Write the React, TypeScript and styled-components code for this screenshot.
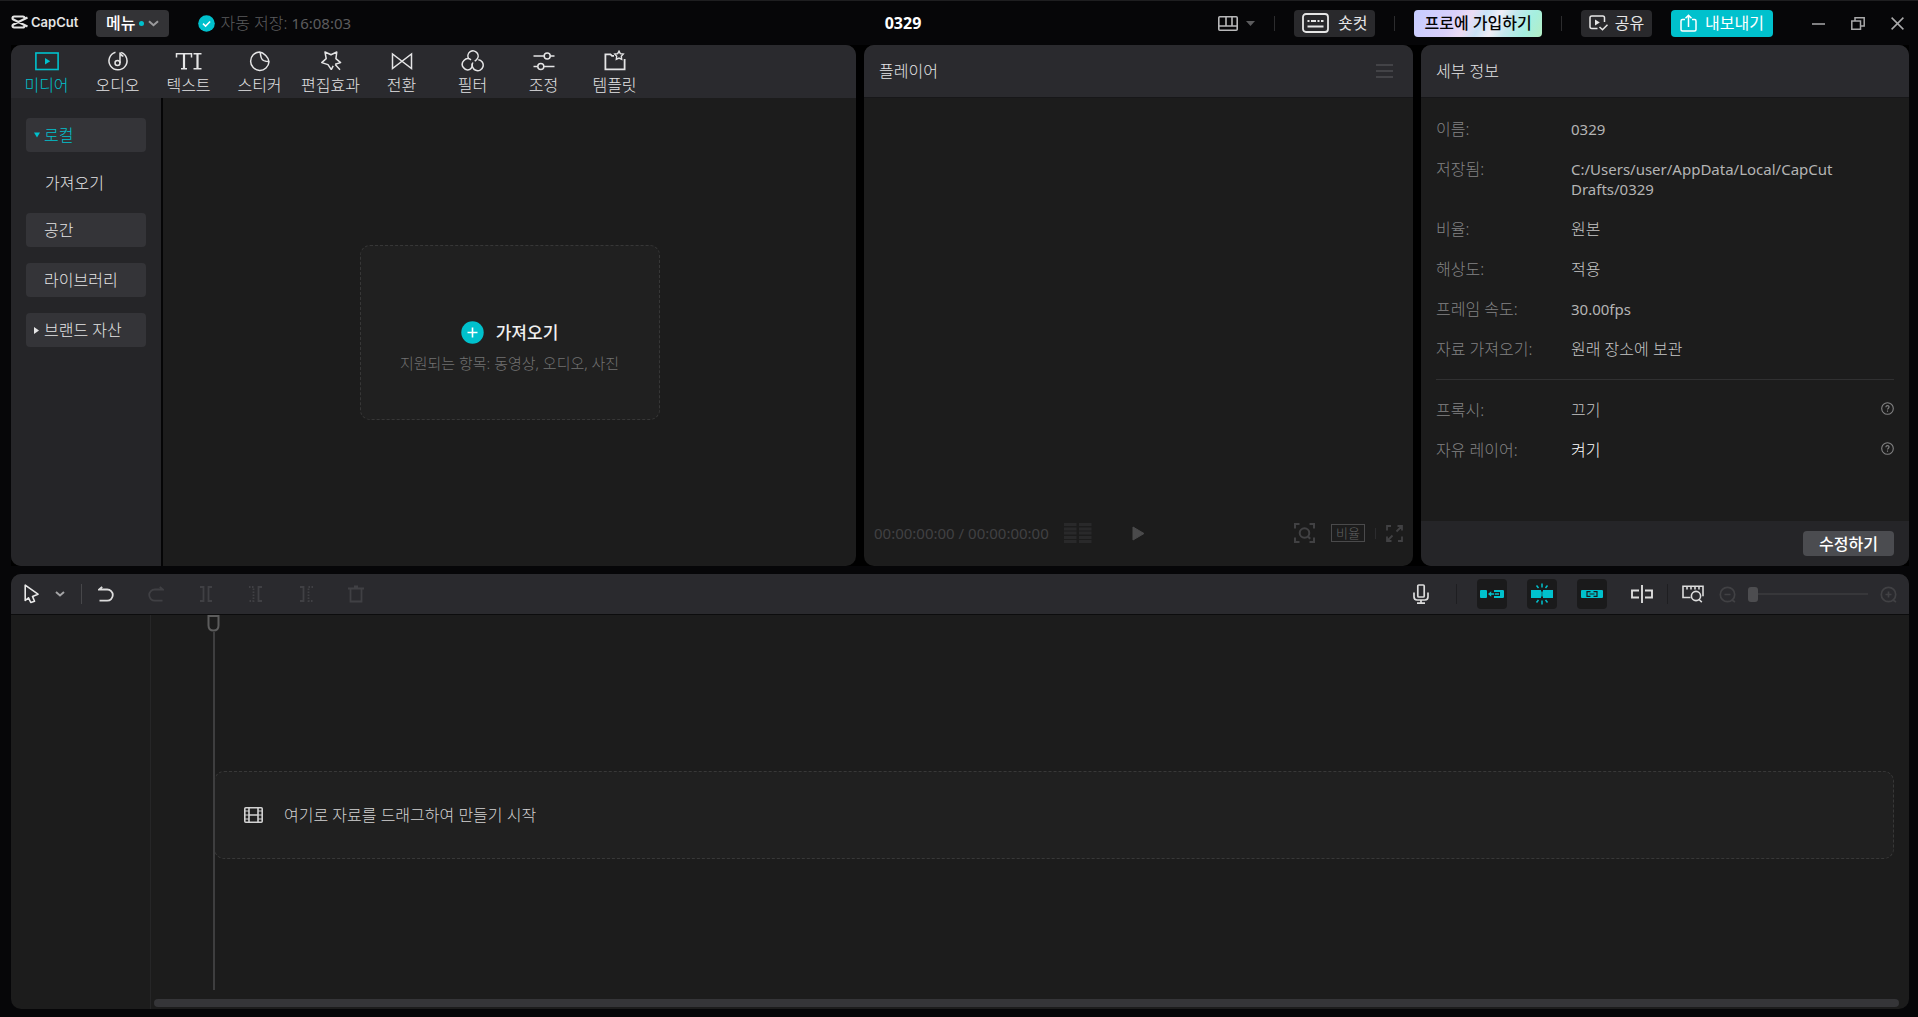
import React from "react";
import styled, { createGlobalStyle, css } from "styled-components";

const color = {
  shell: "#060608",
  panel: "#1c1c1c",
  header: "#2a2a2e",
  sidebar: "#252528",
  item: "#343438",
  accent: "#00c1cd",
  text: "#e4e4e5",
  muted: "#838384",
  dim: "#414143",
};

const GlobalStyle = createGlobalStyle`
  *, *::before, *::after { box-sizing: border-box; }
  body {
    margin: 0;
    background: ${color.shell};
    color: ${color.text};
    font-family: "Noto Sans", "Noto Sans CJK KR", sans-serif;
    font-size: 16px;
    line-height: 20px;
    font-weight: 300;
  }
  button {
    margin: 0;
    padding: 0;
    border: 0;
    background: none;
    color: inherit;
    font: inherit;
    white-space: nowrap;
  }
  h1, h2, p, dl, dt, dd { margin: 0; font: inherit; }
  svg { display: block; flex: none; }
`;

const Shell = styled.div`
  display: grid;
  grid-template-rows: 44px minmax(420px, 521fr) minmax(300px, 443fr);
  min-height: 100vh;
  border-top: 1px solid #1e1e20;
  padding: 0 9px 8px 11px;
`;

/* ---------- title bar ---------- */

const TitleBar = styled.header`
  display: grid;
  grid-template-columns: 874fr auto 988fr;
  align-items: center;
`;

const BarLeft = styled.div`
  display: flex;
  align-items: center;
`;

const BarRight = styled.div`
  display: flex;
  align-items: center;
  justify-content: flex-end;
  gap: 19px;
`;

const Brand = styled.div`
  display: flex;
  align-items: center;
  gap: 3px;
  width: 85px;
  padding-bottom: 2px;
  color: #e4e4e4;
  font-family: Inter, sans-serif;
  font-size: 13px;
  font-weight: 600;
`;

const ProjectName = styled.h1`
  color: #fff;
  font-weight: 700;
`;

const BarButton = styled.button<{ $tone?: "dark" | "menu" | "pro" | "accent"; $pad: number; $gap?: number }>`
  display: flex;
  align-items: center;
  gap: ${(p) => p.$gap ?? 6}px;
  height: 27px;
  padding: 0 ${(p) => p.$pad}px;
  border-radius: 4px;
  background: #29292c;
  color: #e6e6e6;
  font-weight: 400;
  ${(p) => p.$tone === "menu" && css`background: #333336; color: #fff; font-weight: 500;`}
  ${(p) =>
    p.$tone === "pro" &&
    css`
      background: linear-gradient(118deg, #c6ccff 0%, #d9d0fb 30%, #ecdcf4 42%, #c9e2f6 52%, #f0eef6 62%, #c4e8ee 72%, #a5efe0 86%, #b4eec4 100%);
      color: #050505;
      font-weight: 500;
    `}
  ${(p) => p.$tone === "accent" && css`background: ${color.accent}; color: #fff;`}
`;

const MenuDot = styled.span`
  width: 5px;
  height: 5px;
  border-radius: 50%;
  background: ${color.accent};
`;

const AutoSave = styled.p`
  display: flex;
  align-items: center;
  gap: 5px;
  margin-left: 29px;
  color: #5c5c5e;
`;

const Latin = styled.span`
  font-size: 15px;
  font-weight: 400;
`;

const Rule = styled.span<{ $h?: number; $c?: string }>`
  flex: none;
  width: 1px;
  height: ${(p) => p.$h ?? 15}px;
  background: ${(p) => p.$c ?? "#2c2c2e"};
`;

const LayoutButton = styled.button`
  display: flex;
  align-items: center;
  gap: 8px;
  color: #b8b8b9;
`;

const WindowButtons = styled.div`
  display: flex;
  align-items: center;
  gap: 26px;
  margin-left: 20px;
  padding-right: 5px;
  color: #a9a9aa;
`;

/* ---------- panels ---------- */

const Workspace = styled.main`
  display: grid;
  grid-template-columns: 845fr 549fr 488fr;
  gap: 8px;
  background: #000;
`;

const Panel = styled.section`
  display: flex;
  flex-direction: column;
  min-width: 0;
  border-radius: 10px;
  overflow: hidden;
  background: ${color.panel};
`;

const PanelHeader = styled.header`
  display: flex;
  align-items: center;
  justify-content: space-between;
  height: 53px;
  padding: 0 20px 0 15px;
  border-bottom: 1px solid #171719;
  background: ${color.header};
`;

const Tabs = styled.nav`
  display: grid;
  grid-template-columns: repeat(9, 1fr);
  flex: none;
  height: 53px;
  padding-right: 206px;
  background: ${color.header};
`;

const Tab = styled.button<{ $active?: boolean }>`
  display: flex;
  flex-direction: column;
  align-items: center;
  gap: 3px;
  padding-top: 5px;
  color: ${(p) => (p.$active ? color.accent : color.text)};
`;

const MediaBody = styled.div`
  display: grid;
  grid-template-columns: 152px 1fr;
  flex: 1;
`;

const Sidebar = styled.nav`
  display: flex;
  flex-direction: column;
  gap: 16px;
  padding: 20px 15px;
  border-right: 2px solid #050506;
  background: ${color.sidebar};
`;

const SideItem = styled.button<{ $active?: boolean }>`
  display: grid;
  grid-template-columns: 10px auto;
  align-items: center;
  justify-content: start;
  height: 34px;
  padding-left: 8px;
  border-radius: 4px;
  background: ${color.item};
  color: ${(p) => (p.$active ? color.accent : color.text)};
`;

const SideChild = styled.button`
  height: 29px;
  padding: 0 0 0 19px;
  text-align: left;
`;

const ImportArea = styled.div`
  display: flex;
  align-items: center;
  justify-content: center;
`;

const ImportBox = styled.button`
  display: flex;
  flex-direction: column;
  align-items: center;
  gap: 8px;
  width: 300px;
  height: 175px;
  padding-top: 75px;
  border: 1px dashed #373737;
  border-radius: 10px;
  background: #202020;
`;

const ImportTitle = styled.span`
  display: flex;
  align-items: center;
  gap: 12px;
  height: 24px;
  color: #f0f0f0;
  font-size: 17px;
  font-weight: 500;
`;

const ImportHint = styled.span`
  color: #727272;
  font-size: 15px;
`;

const Stage = styled.div`
  flex: 1;
`;

const PlayerControls = styled.footer`
  display: grid;
  grid-template-columns: 1fr auto 1fr;
  align-items: center;
  height: 66px;
  padding: 0 10px;
  color: ${color.dim};
`;

const ControlGroup = styled.div<{ $end?: boolean; $gap: number }>`
  display: flex;
  align-items: center;
  justify-content: ${(p) => (p.$end ? "flex-end" : "flex-start")};
  gap: ${(p) => p.$gap}px;
`;

const Timecode = styled.span`
  font-size: 15px;
  font-weight: 400;
  white-space: nowrap;
`;

const RatioButton = styled.button`
  height: 18px;
  padding: 0 4px;
  border: 1px solid #4a4a4b;
  color: #626263;
  font-size: 13px;
  line-height: 16px;
`;

const Details = styled.dl`
  display: flex;
  flex: 1;
  flex-direction: column;
  gap: 20px;
  padding: 21px 15px 0;
`;

const DetailRow = styled.div`
  display: grid;
  grid-template-columns: 135px 1fr auto;
  color: ${color.muted};
`;

const DetailValue = styled.dd<{ $bright?: boolean; $latin?: boolean }>`
  color: ${(p) => (p.$bright ? "#ffffff" : p.$latin ? "#b4b4b4" : "#c6c6c6")};
  font-size: ${(p) => (p.$latin ? 15 : 16)}px;
  font-weight: ${(p) => (p.$latin ? 400 : 300)};
`;

const DetailHelp = styled.dd`
  padding-top: 2px;
`;

const Divider = styled.hr`
  width: 100%;
  height: 1px;
  margin: 0;
  border: 0;
  background: #303031;
`;

const DetailsFooter = styled.footer`
  display: flex;
  align-items: center;
  justify-content: flex-end;
  height: 45px;
  padding: 0 15px;
  background: ${color.sidebar};
`;

const EditButton = styled.button`
  height: 25px;
  padding: 0 16px;
  border-radius: 4px;
  background: #4b4c50;
  color: #fff;
  font-weight: 500;
`;

/* ---------- timeline ---------- */

const Timeline = styled(Panel)`
  margin-top: 8px;
`;

const Toolbar = styled.div`
  display: flex;
  align-items: center;
  flex: none;
  height: 41px;
  padding: 0 12px 0 10px;
  border-bottom: 1px solid #0c0c0d;
  background: ${color.header};
`;

const ToolGroup = styled.div<{ $push?: boolean }>`
  display: flex;
  align-items: center;
  gap: 20px;
  ${(p) => (p.$push ? css`margin-left: auto;` : css`padding-left: 9px;`)}
`;

const Tool = styled.button<{ $on?: boolean; $off?: boolean }>`
  display: grid;
  place-items: center;
  width: 30px;
  height: 30px;
  border-radius: 4px;
  color: ${(p) => (p.$on ? color.accent : p.$off ? "#404044" : "#dcdcdc")};
  background: ${(p) => (p.$on ? "#1a1a1b" : "none")};
`;

const PointerTool = styled.button`
  display: flex;
  align-items: center;
  gap: 15px;
  padding: 0 16px 0 3px;
  color: #e8e8e8;
`;

const ToolRule = styled.span`
  display: flex;
  padding: 0 10px;
`;

const ZoomGroup = styled.div`
  display: flex;
  align-items: center;
  gap: 12px;
  margin-left: 11px;
  color: #414144;
`;

const ZoomRange = styled.input`
  appearance: none;
  width: 120px;
  height: 16px;
  margin: 0;
  background: linear-gradient(#37373a, #37373a) center / 100% 2px no-repeat;
  &::-webkit-slider-thumb {
    appearance: none;
    width: 10px;
    height: 15px;
    border-radius: 3px;
    background: #4d4d50;
  }
`;

const Tracks = styled.div`
  display: grid;
  grid-template-columns: 140px 1fr;
  flex: 1;
`;

const TrackHeads = styled.div`
  border-right: 1px solid #262627;
`;

const Lanes = styled.div`
  position: relative;
  display: grid;
  grid-template-rows: 156fr 88px 140fr 8px 2px;
`;

const DropLane = styled.div`
  display: flex;
  align-items: center;
  grid-row: 2;
  gap: 21px;
  margin: 0 15px 0 63px;
  padding-left: 29px;
  border: 1px dashed #383838;
  border-radius: 10px;
  background: #202020;
  color: #d2d2d2;
`;

const ScrollThumb = styled.div`
  grid-row: 4;
  margin: 0 10px 0 3px;
  border-radius: 4px;
  background: #353538;
`;

const Playhead = styled.div`
  position: absolute;
  top: 0;
  bottom: 19px;
  left: 56px;
  display: flex;
  flex-direction: column;
  align-items: center;
  width: 13px;
  color: #5c5c5c;
  &::after {
    content: "";
    flex: 1;
    width: 2px;
    background: #3e3e3f;
  }
`;

/* ---------- icons ---------- */

type IconProps = { w: number; h: number; sw?: number; children: React.ReactNode };

const Icon = ({ w, h, sw = 1.5, children }: IconProps) => (
  <svg width={w} height={h} viewBox={`0 0 ${w} ${h}`} fill="none" stroke="currentColor" strokeWidth={sw} aria-hidden="true">
    {children}
  </svg>
);

const Chevron = ({ c }: { c: string }) => (
  <svg width="11" height="7" viewBox="0 0 11 7" fill="none" stroke={c} strokeWidth="2" aria-hidden="true">
    <path d="M1 1.2l4.5 4 4.5-4" />
  </svg>
);

const HelpIcon = () => (
  <Icon w={13} h={13} sw={1.1}>
    <circle cx="6.5" cy="6.5" r="5.8" />
    <path d="M4.9 5.2c0-2.2 3.3-2 3.2-.1 0 1.1-1.6 1.2-1.6 2.5M6.5 8.6v1.2" />
  </Icon>
);

const tabs = [
  {
    label: "미디어",
    icon: (
      <Icon w={24} h={22} sw={1.6}>
        <rect x="0.9" y="3" width="22.2" height="16.5" />
        <path d="M10 8v6.6l5.2-3.3z" fill="currentColor" stroke="none" />
      </Icon>
    ),
  },
  {
    label: "오디오",
    icon: (
      <Icon w={22} h={22}>
        <path d="M8.5 2.2a9 9 0 1 0 5.6.2" />
        <circle cx="10.5" cy="13" r="2.5" />
        <path d="M13 13V2.5c.4 2.2 1.6 3.3 3.4 3.7" />
      </Icon>
    ),
  },
  {
    label: "텍스트",
    icon: (
      <Icon w={28} h={22} sw={1.5}>
        <path d="M1.5 7.5V3.8h15v3.700M6 18.8h6M18.5 3.8h8M18.5 18.8h8" />
        <path d="M9 4v14.500M22.5 4v14.5" strokeWidth="2.200" />
      </Icon>
    ),
  },
  {
    label: "스티커",
    icon: (
      <Icon w={22} h={22}>
        <path d="M10.5 2a9.2 9.2 0 1 0 9.5 9.8C20 8 14.5 2.3 10.5 2zM10.5 2c1 .8 1 2.300 1.300 4 .4 3.200 2.200 5 5.200 5.200 1.500 0 2.500 0 3 .6" />
      </Icon>
    ),
  },
  {
    label: "편집효과",
    icon: (
      <Icon w={22} h={22}>
        <path d="M11.300 19.600L8 14.600l-6.300-2 4.500-4L5 2l6 2.800L16.800 2l-.9 6.600 4.700 4-5.400 1.600M11.300 19.600l1.900-3.800M15.200 14.600l4.800 5.200" strokeLinejoin="round" />
      </Icon>
    ),
  },
  {
    label: "전환",
    icon: (
      <Icon w={22} h={22}>
        <path d="M1.5 4v14.500L20.500 4v14.500z" />
      </Icon>
    ),
  },
  {
    label: "필터",
    icon: (
      <Icon w={24} h={22}>
        <path d="M7.500 8.300a5.100 5.100 0 1 1 8.200 1.200c-.6.700-1.300 1.200-2 1.700" />
        <path d="M10 9.800A5.500 5.500 0 1 0 9.300 19.200M11 13.500a5.600 5.600 0 0 1-1.700 5.700" />
        <path d="M17.300 9.700a5.500 5.500 0 1 1-5.400 2.800" />
      </Icon>
    ),
  },
  {
    label: "조정",
    icon: (
      <Icon w={22} h={22}>
        <path d="M.5 6h10.800M17.200 6h4.300M.5 16.500h4.300M10.700 16.500h10.800" />
        <circle cx="14.2" cy="6" r="3" />
        <circle cx="7.8" cy="16.5" r="3" />
      </Icon>
    ),
  },
  {
    label: "템플릿",
    icon: (
      <Icon w={22} h={22} sw={1.8}>
        <path d="M10 5.800H8L6.500 4.300H1.400v15h19.200V9" />
        <path d="M15 1.200l1.300 2.400 3 .5-2 2.200.4 3L15 8.100l-2.700 1.200.4-3-2-2.200 3-.5z" strokeWidth="1.400" />
      </Icon>
    ),
  },
];

const details: { label: string; value: string; latin?: boolean }[] = [
  { label: "이름:", value: "0329", latin: true },
  { label: "저장됨:", value: "C:/Users/user/AppData/Local/CapCut Drafts/0329", latin: true },
  { label: "비율:", value: "원본" },
  { label: "해상도:", value: "적용" },
  { label: "프레임 속도:", value: "30.00fps", latin: true },
  { label: "자료 가져오기:", value: "원래 장소에 보관" },
];

const options = [
  { label: "프록시:", value: "끄기" },
  { label: "자유 레이어:", value: "켜기", bright: true },
];

const Header = () => (
  <TitleBar>
    <BarLeft>
      <Brand>
        <Icon w={17} h={14} sw={2.2}>
          <path d="M13.5 4.2V3.2c0-1-.6-1.700-1.600-1.700H3.100c-1 0-1.600.7-1.600 1.700 0 .7.3 1.100.9 1.400L16.500 11.500M13.500 9.800v1c0 1-.6 1.700-1.600 1.700H3.100c-1 0-1.600-.7-1.600-1.700 0-.7.3-1.100.9-1.400L16.500 2.500" />
        </Icon>
        CapCut
      </Brand>
      <BarButton $tone="menu" $pad={10} $gap={4}>
        메뉴
        <MenuDot />
        <Chevron c="#9a9a9c" />
      </BarButton>
      <AutoSave>
        <svg width="17" height="17" viewBox="0 0 17 17" aria-hidden="true">
          <circle cx="8.5" cy="8.5" r="8.3" fill={color.accent} />
          <path d="M5 8.6l2.600 2.500 4.500-4.600" fill="none" stroke="#fff" strokeWidth="1.5" />
        </svg>
        <span>
          자동 저장: <Latin>16:08:03</Latin>
        </span>
      </AutoSave>
    </BarLeft>
    <ProjectName>0329</ProjectName>
    <BarRight>
      <LayoutButton aria-label="레이아웃">
        <Icon w={20} h={15} sw={1.6}>
          <rect x="0.8" y="0.8" width="18.4" height="13.4" rx="1" />
          <path d="M1 10h18M8 1v9M14 1v9" />
        </Icon>
        <svg width="9" height="5" viewBox="0 0 9 5" aria-hidden="true">
          <path d="M0 0h9L4.500 5z" fill="#5b5b5d" />
        </svg>
      </LayoutButton>
      <Rule />
      <BarButton $pad={8} $gap={9}>
        <Icon w={27} h={20} sw={1.8}>
          <rect x="1" y="1" width="25" height="18" rx="3" />
          <path d="M5.500 8h2M9 8h5M15.500 8h2M19 8h2.500M5.500 13.500h16" />
        </Icon>
        숏컷
      </BarButton>
      <Rule />
      <BarButton $tone="pro" $pad={10}>프로에 가입하기</BarButton>
      <Rule />
      <BarButton $pad={8} $gap={7}>
        <Icon w={19} h={16}>
          <path d="M8.500 13.500H2.800c-1 0-1.800-.7-1.800-1.700V2.800C1 1.700 1.800 1 2.800 1h11c1 0 1.700.7 1.700 1.800V7M10.500 12l3 2.800 5-5" />
          <path d="M6 4.500v6l4.800-3z" fill="currentColor" stroke="none" />
        </Icon>
        공유
      </BarButton>
      <BarButton $tone="accent" $pad={9} $gap={8}>
        <Icon w={17} h={18}>
          <path d="M5 5.500H2.500c-1 0-1.500.6-1.500 1.500v8.500c0 1 .6 1.500 1.500 1.500h12c1 0 1.500-.6 1.500-1.500V7c0-1-.6-1.500-1.500-1.500H12M8.500 13V1.500M5.500 4.300l3-3 3 3" />
        </Icon>
        내보내기
      </BarButton>
      <WindowButtons>
        <button aria-label="최소화">
          <Icon w={13} h={13}><path d="M0 7h13" /></Icon>
        </button>
        <button aria-label="이전 크기로">
          <Icon w={14} h={13}><path d="M.8 4h8.700v8.300H.8zM4 4V.8h9.200V9H9.500" /></Icon>
        </button>
        <button aria-label="닫기">
          <Icon w={13} h={13}><path d="M.6.6l11.800 11.800M12.400.6L.6 12.400" /></Icon>
        </button>
      </WindowButtons>
    </BarRight>
  </TitleBar>
);

const MediaPanel = () => (
  <Panel>
    <Tabs>
      {tabs.map((t, i) => (
        <Tab key={t.label} $active={i === 0}>
          {t.icon}
          {t.label}
        </Tab>
      ))}
    </Tabs>
    <MediaBody>
      <Sidebar>
        <SideItem $active>
          <svg width="6" height="6" viewBox="0 0 6 6" aria-hidden="true"><path d="M0 .5h6L3 5.500z" fill="currentColor" /></svg>
          로컬
        </SideItem>
        <SideChild>가져오기</SideChild>
        <SideItem><span />공간</SideItem>
        <SideItem><span />라이브러리</SideItem>
        <SideItem>
          <svg width="6" height="7" viewBox="0 0 6 7" aria-hidden="true"><path d="M0 0v7l5-3.500z" fill="currentColor" /></svg>
          브랜드 자산
        </SideItem>
      </Sidebar>
      <ImportArea>
        <ImportBox>
          <ImportTitle>
            <svg width="23" height="23" viewBox="0 0 23 23" aria-hidden="true">
              <circle cx="11.5" cy="11.5" r="11.2" fill={color.accent} />
              <path d="M6.500 11.500h10M11.500 6.500v10" stroke="#fff" strokeWidth="1.6" />
            </svg>
            가져오기
          </ImportTitle>
          <ImportHint>지원되는 항목: 동영상, 오디오, 사진</ImportHint>
        </ImportBox>
      </ImportArea>
    </MediaBody>
  </Panel>
);

const PlayerPanel = () => (
  <Panel>
    <PanelHeader>
      <h2>플레이어</h2>
      <button aria-label="플레이어 메뉴">
        <svg width="17" height="14" viewBox="0 0 17 14" stroke="#434347" strokeWidth="2" aria-hidden="true">
          <path d="M0 1h17M0 7h17M0 13h17" />
        </svg>
      </button>
    </PanelHeader>
    <Stage />
    <PlayerControls>
      <ControlGroup $gap={15}>
        <Timecode>00:00:00:00 / 00:00:00:00</Timecode>
        <svg width="28" height="20" viewBox="0 0 28 20" stroke="#29292a" strokeWidth="3" aria-hidden="true">
          <path d="M0 1.500h12.500M15 1.500h12.500M0 6h12.500M15 6h12.500M0 10h12.500M15 10h12.500M0 14.500h12.500M15 14.500h12.500M0 18.500h12.500M15 18.500h12.500" />
        </svg>
      </ControlGroup>
      <button aria-label="재생">
        <svg width="13" height="15" viewBox="0 0 13 15" aria-hidden="true">
          <path d="M1 1v13l11-6.500z" fill="#4a4a4b" stroke="#4a4a4b" strokeLinejoin="round" />
        </svg>
      </button>
      <ControlGroup $end $gap={10}>
        <ControlGroup $gap={16}>
          <button aria-label="확대 보기">
            <Icon w={21} h={20} sw={2}>
              <path d="M1 5.500V1h4.500M15.500 1H20v4.500M20 14.500V19h-4.500M5.500 19H1v-4.500" />
              <circle cx="10.5" cy="10" r="4.8" />
              <path d="M14 13.500l2.200 2.200" />
            </Icon>
          </button>
          <RatioButton>비율</RatioButton>
        </ControlGroup>
        <Rule $h={11} />
        <button aria-label="전체 화면">
          <Icon w={17} h={17} sw={1.8}>
            <path d="M1 5.500V1h4M11.500 1H16v4.500M16 11.500V16h-4M5.500 16H1v-4.500M16 1l-5.500 5.500M1 16l5.500-5.500" />
          </Icon>
        </button>
      </ControlGroup>
    </PlayerControls>
  </Panel>
);

const DetailsPanel = () => (
  <Panel>
    <PanelHeader>
      <h2>세부 정보</h2>
    </PanelHeader>
    <Details>
      {details.map((d) => (
        <DetailRow key={d.label}>
          <dt>{d.label}</dt>
          <DetailValue $latin={d.latin}>{d.value}</DetailValue>
        </DetailRow>
      ))}
      <Divider />
      {options.map((o) => (
        <DetailRow key={o.label}>
          <dt>{o.label}</dt>
          <DetailValue $bright={o.bright}>{o.value}</DetailValue>
          <DetailHelp><HelpIcon /></DetailHelp>
        </DetailRow>
      ))}
    </Details>
    <DetailsFooter>
      <EditButton>수정하기</EditButton>
    </DetailsFooter>
  </Panel>
);

const TimelinePanel = () => (
  <Timeline>
    <Toolbar>
      <PointerTool aria-label="선택 도구">
        <Icon w={16} h={20} sw={1.6}>
          <path d="M1.200 1.200v15.300l3.300-2.700 2.300 4.700 3.700-1.300-2-4.800 5.500-2.200z" strokeLinejoin="round" />
        </Icon>
        <svg width="10" height="6" viewBox="0 0 10 6" fill="none" stroke="#a4a4a6" strokeWidth="2" aria-hidden="true"><path d="M1 1l4 3.500L9 1" /></svg>
      </PointerTool>
      <Rule $h={20} $c="#47474a" />
      <ToolGroup>
        <Tool aria-label="실행 취소">
          <Icon w={16} h={16} sw={1.8}><path d="M4.200.8L1.200 3.500h8a5.600 5.600 0 0 1 0 11.200H1.500" /></Icon>
        </Tool>
        <Tool $off aria-label="다시 실행">
          <Icon w={16} h={16} sw={1.8}><path d="M11.800.8l3 2.700h-8a5.600 5.600 0 0 0 0 11.200h7.700" /></Icon>
        </Tool>
        <Tool $off aria-label="분할">
          <Icon w={14} h={16} sw={1.8}><path d="M1 1h3.500v14H1M13 1H9.500v14H13" /></Icon>
        </Tool>
        <Tool $off aria-label="왼쪽 삭제">
          <Icon w={14} h={16} sw={1.8}><path d="M0 1h4.500v14H0" strokeDasharray="1.5 1.5" /><path d="M13 1H9.500v14H13" /></Icon>
        </Tool>
        <Tool $off aria-label="오른쪽 삭제">
          <Icon w={14} h={16} sw={1.8}><path d="M1 1h3.500v14H1" /><path d="M14 1H9.500v14H14" strokeDasharray="1.5 1.5" /></Icon>
        </Tool>
        <Tool $off aria-label="삭제">
          <Icon w={16} h={18} sw={1.8}><path d="M0 3.500h16M6 1.500h4M2.500 4v12.500h11V4" /></Icon>
        </Tool>
      </ToolGroup>
      <ToolGroup $push>
        <Tool aria-label="녹음">
          <Icon w={16} h={20} sw={1.7}>
            <rect x="4.800" y="1" width="6.4" height="12" rx="1" />
            <path d="M1 8.500v4.300c0 2 1 3.200 3 3.200h8c2 0 3-1.200 3-3.200V8.500M8 16v3.200M4 19.200h8" />
          </Icon>
        </Tool>
        <Rule $h={20} $c="#1e1e21" />
        <Tool $on aria-label="메인 트랙 자석">
          <svg width="24" height="10" viewBox="0 0 24 10" fill="currentColor" aria-hidden="true">
            <rect y="1" width="7" height="8" rx="1" />
            <path d="M8 5l3.200-2.800v2h3v1.600h-3v2z" />
            <path d="M14 1h8.500c.9 0 1.500.5 1.500 1.300v5.400c0 .8-.6 1.300-1.500 1.300H14V7h6V3h-6z" />
            <path d="M15 4.300h4v1.400h-4z" />
          </svg>
        </Tool>
        <Tool $on aria-label="자동 스냅">
          <Icon w={22} h={22} sw={1.5}>
            <path d="M0 7h10v8H0zM12 7h10v8H12z" fill="currentColor" stroke="none" />
            <path d="M11 8.500v5M11 .5v4M11 17.500v4M5.500 2.500l2 2.500M16.500 2.500l-2 2.500M5.500 19.500l2-2.500M16.500 19.500l-2-2.500" />
          </Icon>
        </Tool>
        <Tool $on aria-label="연결">
          <svg width="22" height="10" viewBox="0 0 22 10" aria-hidden="true">
            <rect y="1" width="22" height="8" rx="1" fill="currentColor" />
            <path d="M9.500 2.700H6v4.600h3.500M12.500 2.700H16v4.600h-3.500M8.500 5h5" fill="none" stroke="#1a1a1b" strokeWidth="1.2" />
          </svg>
        </Tool>
        <Tool aria-label="미리보기 축">
          <Icon w={22} h={18} sw={1.9}><path d="M8 5.500H1v7h7M14 5.500h7v7h-7M11 0v18" /></Icon>
        </Tool>
      </ToolGroup>
      <ToolRule>
        <Rule $h={20} $c="#1e1e21" />
      </ToolRule>
      <Tool aria-label="타임라인에 맞춤">
        <Icon w={22} h={18} sw={1.6}>
          <path d="M8.500 12.500H1V1.200h20v10M5 1.500v3M9 1.500v3M13 1.500v3M17 1.500v3" />
          <circle cx="14" cy="11" r="4.6" />
          <path d="M17 14.500l2.800 2.600" />
        </Icon>
      </Tool>
      <ZoomGroup>
        <button aria-label="축소">
          <Icon w={17} h={17} sw={1.7}><circle cx="8.5" cy="8.5" r="7.2" /><path d="M5.500 8.500h6M13 14l3 2" /></Icon>
        </button>
        <ZoomRange type="range" min={0} max={100} defaultValue={0} aria-label="타임라인 확대" />
        <button aria-label="확대">
          <Icon w={17} h={17} sw={1.7}><circle cx="8.5" cy="8.5" r="7.2" /><path d="M5.500 8.500h6M8.500 5.500v6M13 14l3 2" /></Icon>
        </button>
      </ZoomGroup>
    </Toolbar>
    <Tracks>
      <TrackHeads />
      <Lanes>
        <DropLane>
          <Icon w={19} h={16} sw={1.6}>
            <rect x="0.8" y="0.8" width="17.4" height="14.4" rx="1" />
            <path d="M5 1v14M14 1v14M5 8h9" />
            <path d="M1 4h4M1 8h4M1 12h4M14 4h4M14 8h4M14 12h4" strokeWidth="1.2" />
          </Icon>
          여기로 자료를 드래그하여 만들기 시작
        </DropLane>
        <ScrollThumb />
        <Playhead>
          <Icon w={13} h={17} sw={2}>
            <path d="M1.500 1h10v9.500c0 3-2 5-5 5s-5-2-5-5z" />
          </Icon>
        </Playhead>
      </Lanes>
    </Tracks>
  </Timeline>
);

export default function App() {
  return (
    <>
      <GlobalStyle />
      <Shell>
        <Header />
        <Workspace>
          <MediaPanel />
          <PlayerPanel />
          <DetailsPanel />
        </Workspace>
        <TimelinePanel />
      </Shell>
    </>
  );
}
